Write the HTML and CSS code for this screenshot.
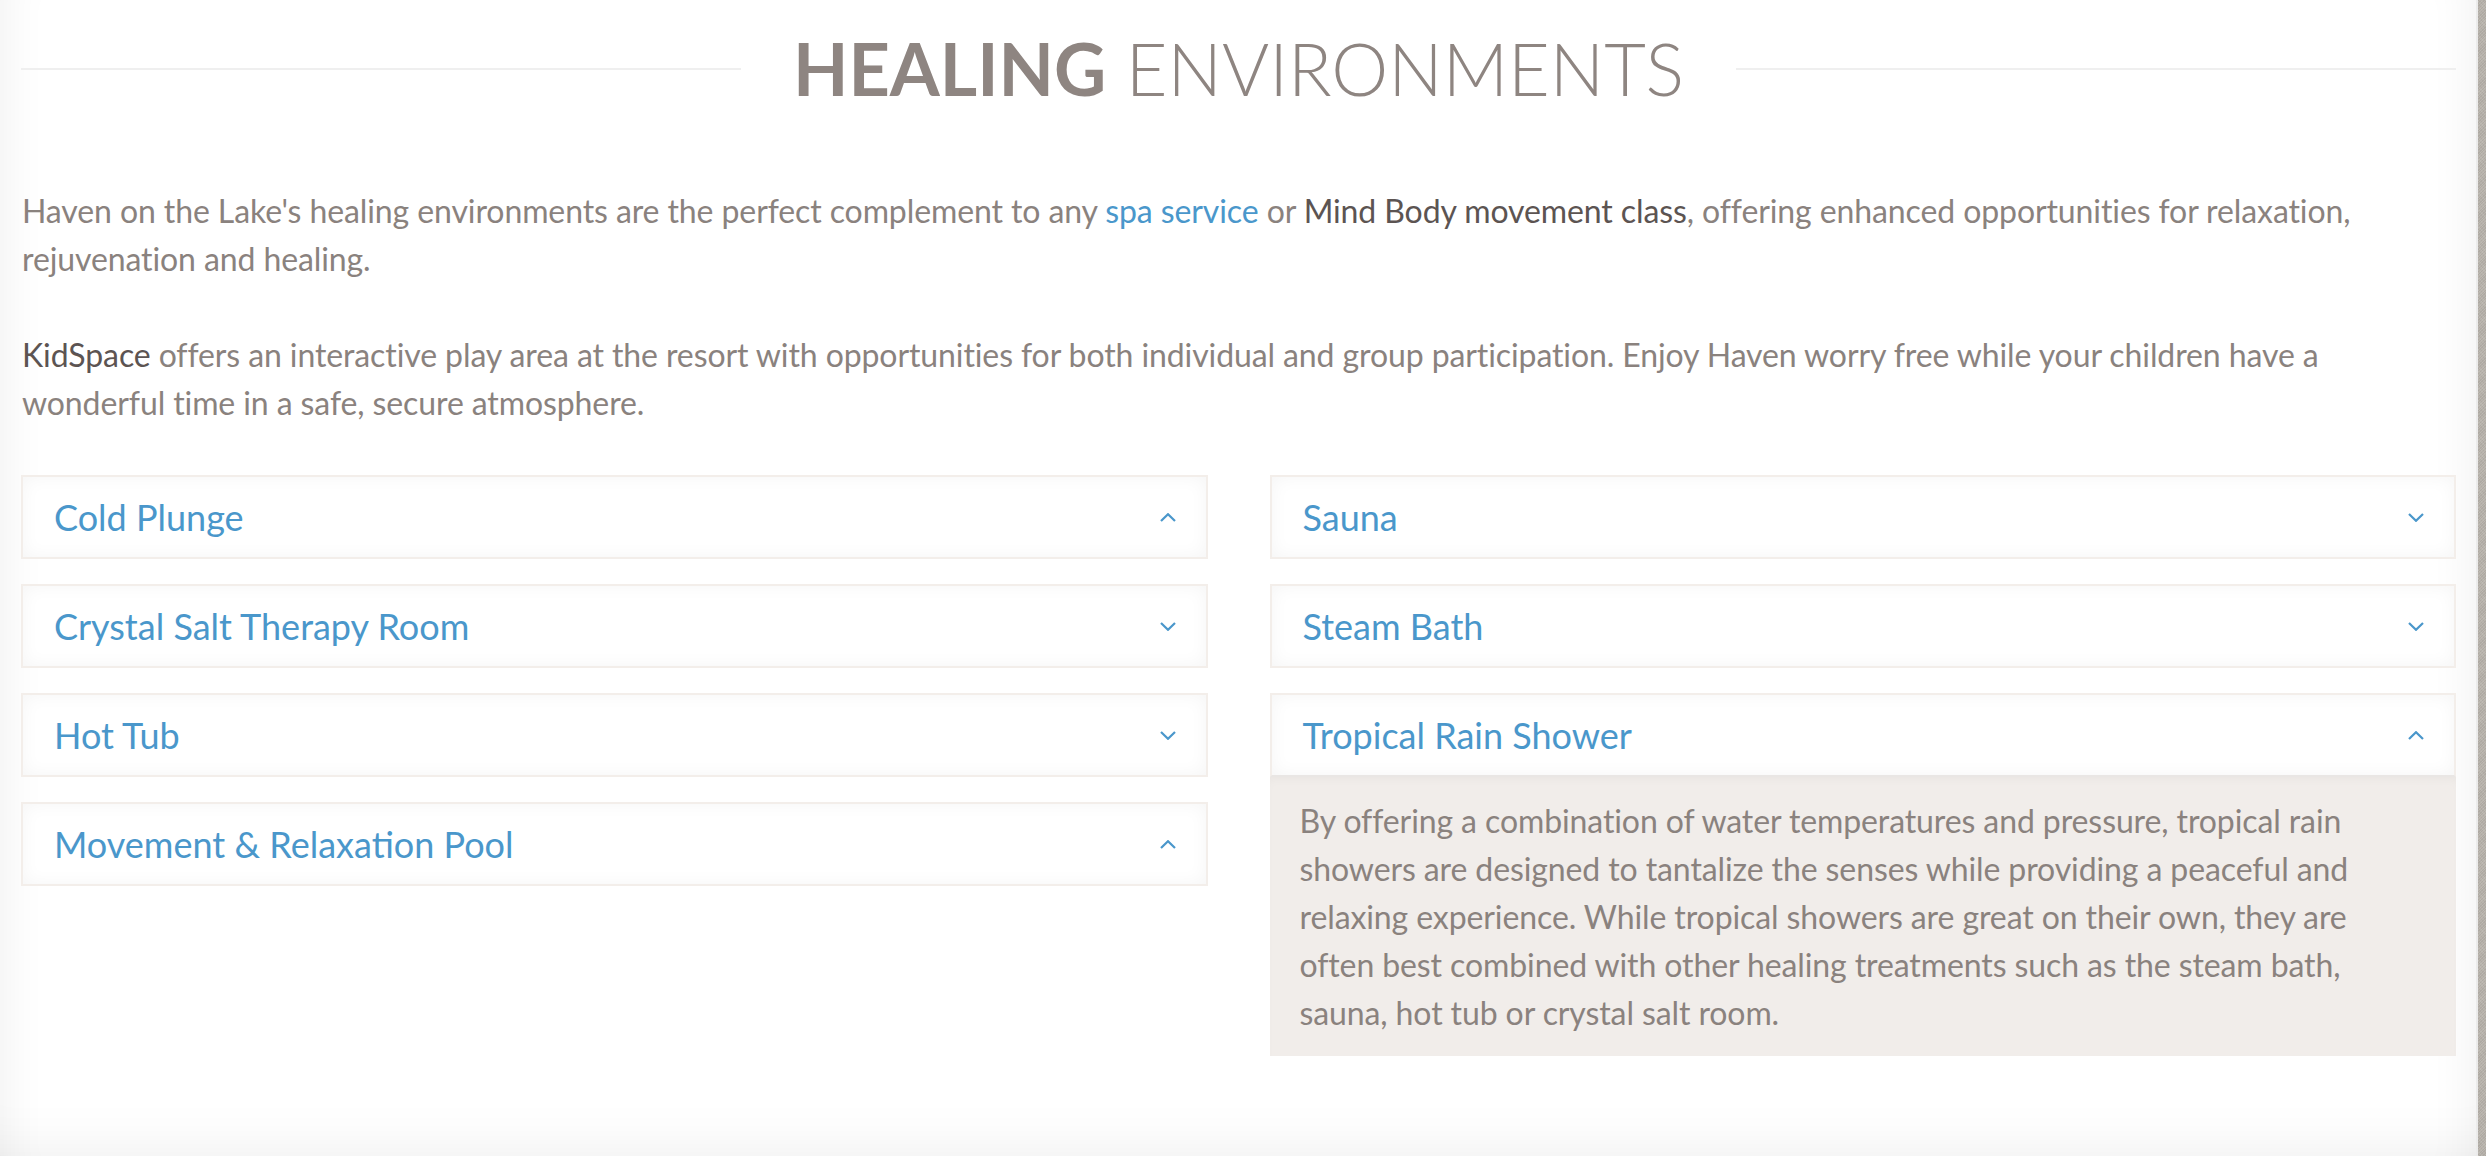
FILE: index.html
```html
<!DOCTYPE html>
<html lang="en">
<head>
<meta charset="utf-8">
<title>Healing Environments</title>
<link rel="stylesheet" href="styles.css">
</head>
<body>
<div class="page">
  <div class="content">
    <div class="title-row">
      <span class="rule"></span>
      <h1 class="title"><b>HEALING</b> ENVIRONMENTS</h1>
      <span class="rule"></span>
    </div>
    <p class="intro">Haven on the Lake's healing environments are the perfect complement to any <a class="link" href="#">spa service</a> or <a class="dark" href="#">Mind Body movement class</a>, offering enhanced opportunities for relaxation, rejuvenation and healing.</p>
    <p class="intro last"><a class="dark" href="#">KidSpace</a> offers an interactive play area at the resort with opportunities for both individual and group participation. Enjoy Haven worry free while your children have a wonderful time in a safe, secure atmosphere.</p>

    <div class="accordion">
      <div class="col">
        <div class="item">
          <div class="head"><span class="name">Cold Plunge</span><svg class="chev" viewBox="0 0 16 9"><polyline points="1,8 8,1.2 15,8"/></svg></div>
        </div>
        <div class="item">
          <div class="head"><span class="name">Crystal Salt Therapy Room</span><svg class="chev" viewBox="0 0 16 9"><polyline points="1,1 8,7.8 15,1"/></svg></div>
        </div>
        <div class="item">
          <div class="head"><span class="name">Hot Tub</span><svg class="chev" viewBox="0 0 16 9"><polyline points="1,1 8,7.8 15,1"/></svg></div>
        </div>
        <div class="item">
          <div class="head"><span class="name">Movement &amp; Relaxation Pool</span><svg class="chev" viewBox="0 0 16 9"><polyline points="1,8 8,1.2 15,8"/></svg></div>
        </div>
      </div>
      <div class="col">
        <div class="item">
          <div class="head"><span class="name">Sauna</span><svg class="chev" viewBox="0 0 16 9"><polyline points="1,1 8,7.8 15,1"/></svg></div>
        </div>
        <div class="item">
          <div class="head"><span class="name">Steam Bath</span><svg class="chev" viewBox="0 0 16 9"><polyline points="1,1 8,7.8 15,1"/></svg></div>
        </div>
        <div class="item open">
          <div class="head"><span class="name">Tropical Rain Shower</span><svg class="chev" viewBox="0 0 16 9"><polyline points="1,8 8,1.2 15,8"/></svg></div>
          <div class="panel">
            <p>By offering a combination of water temperatures and pressure, tropical rain showers are designed to tantalize the senses while providing a peaceful and relaxing experience. While tropical showers are great on their own, they are often best combined with other healing treatments such as the steam bath, sauna, hot tub or crystal salt room.</p>
          </div>
        </div>
      </div>
    </div>
  </div>
</div>
</body>
</html>
```

FILE: styles.css
```css
html, body {
  margin: 0;
  padding: 0;
}

body {
  background-color: #b9b4ad;
  background-image:
    repeating-linear-gradient(45deg, rgba(255,255,255,0.08) 0 1px, transparent 1px 3px),
    repeating-linear-gradient(-45deg, rgba(0,0,0,0.06) 0 1px, transparent 1px 2px);
  font-family: Lato, "Open Sans", sans-serif;
  color: #8a827e;
  overflow: hidden;
}

.page {
  width: 2478px;
  height: 1156px;
  box-sizing: border-box;
  background: #ffffff;
  border-right: 2px solid #ebebeb;
  box-shadow:
    inset 50px 0 50px -50px rgba(0,0,0,0.07),
    inset -50px 0 50px -50px rgba(0,0,0,0.07),
    inset 0 -60px 60px -60px rgba(0,0,0,0.08);
}

.content {
  padding: 25px 20px 0 21px;
}

.title-row {
  display: flex;
  align-items: center;
  gap: 52px;
  margin-bottom: 76px;
}

.rule {
  flex: 1;
  height: 2px;
  background: #efefef;
  margin-top: 2px;
}

.title {
  margin: 0;
  font-size: 72px;
  line-height: 1.2;
  font-weight: 300;
  color: #8e8581;
  white-space: nowrap;
}

.title b {
  font-weight: 700;
}

.intro {
  margin: 0 0 48px;
  padding-left: 1px;
  font-size: 32px;
  line-height: 48px;
  letter-spacing: -0.1px;
}

.intro.last {
  margin-bottom: 48px;
}

.link {
  color: #4a97cb;
  text-decoration: none;
}

.dark {
  color: #5c5452;
  text-decoration: none;
}

.accordion {
  display: grid;
  grid-template-columns: 1fr 1fr;
  column-gap: 62px;
}

.col {
  display: flex;
  flex-direction: column;
  gap: 25px;
}

.head {
  display: flex;
  align-items: center;
  justify-content: space-between;
  padding: 18.5px 30px 18.5px 31px;
  border: 2px solid #f3eeea;
  background: #ffffff;
  box-shadow: inset 0 0 18px rgba(0,0,0,0.045);
}

.name {
  font-size: 36px;
  line-height: 43px;
  color: #4a97cb;
}

.chev {
  width: 16px;
  height: 9px;
  fill: none;
  stroke: #4a97cb;
  stroke-width: 2.2;
  flex: none;
}

.open .head {
  border-bottom-color: #e9e6e4;
}

.panel {
  background: #f1edea;
  padding: 20px 30px 19px;
  box-shadow: inset 0 6px 12px -6px rgba(0,0,0,0.05);
}

.panel p {
  margin: 0;
  font-size: 32px;
  line-height: 48px;
  letter-spacing: -0.1px;
  color: #8a827e;
}
```
